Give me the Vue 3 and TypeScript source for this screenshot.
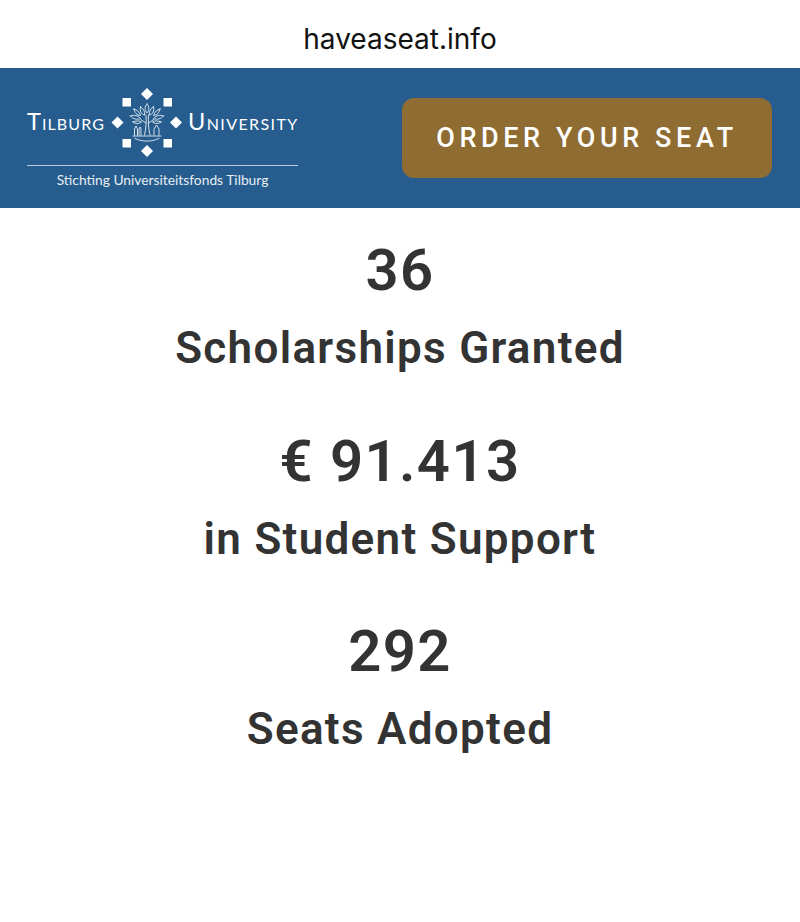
<script setup lang="ts">
interface Stat { value: string; label: string }
const stats: Stat[] = [
  { value: '36', label: 'Scholarships Granted' },
  { value: '€ 91.413', label: 'in Student Support' },
  { value: '292', label: 'Seats Adopted' },
]
</script>

<template>
  <div class="page">
    <div class="address">haveaseat.info</div>
    <header class="header">
      <div class="logo">
        <div class="logo-top">
          <span class="word word-left">Tilburg</span>
          <svg class="emblem" width="90" height="70" viewBox="0 0 90 70" fill="none">
            <g fill="#fff">
              <path d="M45 0l6 6-6 6-6-6z" />
              <path d="M45 57l6 6-6 6-6-6z" />
              <path d="M15.500 28.500l6 6-6 6-6-6z" />
              <path d="M74 28.500l6 6-6 6-6-6z" />
              <rect x="20.500" y="10" width="8.500" height="8.500" />
              <rect x="61.500" y="10" width="8.500" height="8.500" />
              <rect x="20.500" y="51" width="8.500" height="8.500" />
              <rect x="61.500" y="51" width="8.500" height="8.500" />
            </g>
            <g stroke="#fff" stroke-width="0.8" stroke-linecap="round" stroke-linejoin="round">
              <path d="M45 16c2.500 2.500 2.500 6 0 9-2.500-3-2.500-6.500 0-9z" />
              <path d="M38.500 19c3 1.500 4.500 4 4 8-3.500-1-5-4-4-8z" />
              <path d="M51.500 19c-3 1.500-4.500 4-4 8 3.500-1 5-4 4-8z" />
              <path d="M32 21c3 .5 5.500 3 6.500 6.500-3.500 0-6-3-6.500-6.500z" />
              <path d="M58 21c-3 .5-5.500 3-6.500 6.500 3.500 0 6-3 6.500-6.500z" />
              <path d="M28.500 28c3.500-1.500 7.500-.5 10 2.500-3.500 1.500-7.500.5-10-2.500z" />
              <path d="M61.500 28c-3.500-1.500-7.500-.5-10 2.500 3.500 1.500 7.500.5 10-2.500z" />
              <path d="M31 34c3-1.500 6-1.500 8.500 0-2.500 2-6 2-8.500 0z" />
              <path d="M59 34c-3-1.500-6-1.500-8.500 0 2.500 2 6 2 8.500 0z" />
              <path d="M44 27c.3 7 .3 13-1.500 20M46.500 27c-.3 7-.3 13 1.500 20M43.800 35l-5-3.500M46.700 35l5-3.500" />
              <path d="M32.500 47v-6l1.500-3 1.500 3v6M37 47v-6l1-2 1 2v6" />
              <path d="M52 47v-6l2.500-4 2.500 4v6" />
              <path d="M31 48h28" />
              <path d="M33 50.500c7 3.500 17 3.500 24 0" />
            </g>
          </svg>
          <span class="word word-right">University</span>
        </div>
        <div class="logo-sub">Stichting Universiteitsfonds Tilburg</div>
      </div>
      <a class="cta">ORDER YOUR SEAT</a>
    </header>
    <main class="stats">
      <section v-for="s in stats" :key="s.label" class="stat">
        <div class="value">{{ s.value }}</div>
        <div class="label">{{ s.label }}</div>
      </section>
    </main>
  </div>
</template>

<style>
html, body { background: #fff; }
</style>

<style scoped>
.page {
  width: 800px;
  height: 922px;
  background: #fff;
  overflow: hidden;
}
.address {
  height: 68px;
  box-sizing: border-box;
  display: flex;
  align-items: center;
  justify-content: center;
  padding-top: 9px;
  font-family: Inter, sans-serif;
  font-size: 28px;
  color: #111;
}
.header {
  height: 140px;
  background: #265d8e;
  display: flex;
  align-items: flex-start;
  justify-content: space-between;
  padding: 0 28px 0 27px;
}
.logo {
  width: 271px;
  padding-top: 20px;
}
.logo-top {
  display: flex;
  align-items: center;
  height: 70px;
}
.emblem {
  flex: none;
  margin: 0 -3.5px 0 -3.5px;
}
.word {
  font-family: Lato, sans-serif;
  font-variant: small-caps;
  font-size: 23.5px;
  color: #fff;
  line-height: 1;
  white-space: nowrap;
  flex: none;
  margin-bottom: 3px;
}
.word-left {
  width: 78px;
  letter-spacing: 1.1px;
}
.word-right {
  width: 110px;
  text-align: right;
  letter-spacing: 1.4px;
}
.logo-sub {
  margin-top: 7px;
  border-top: 1px solid #b9cbdc;
  padding-top: 5px;
  text-align: center;
  font-family: Lato, sans-serif;
  font-size: 13.8px;
  color: #e6edf3;
}
.cta {
  margin-top: 30px;
  width: 370px;
  height: 80px;
  box-sizing: border-box;
  border-radius: 12px;
  background: #8f6c32;
  color: #fff;
  display: flex;
  align-items: center;
  justify-content: center;
  font-family: Roboto, sans-serif;
  font-weight: 500;
  font-size: 27px;
  letter-spacing: 4.6px;
}
.stats {
  display: flex;
  flex-direction: column;
  align-items: center;
  color: #333;
  font-family: Roboto, sans-serif;
  font-weight: 600;
  padding-top: 27px;
  gap: 47.5px;
}
.stat {
  display: flex;
  flex-direction: column;
  align-items: center;
}
.value {
  font-size: 58px;
  line-height: 70px;
  letter-spacing: 1.4px;
}
.label {
  margin-top: 13px;
  font-size: 44px;
  line-height: 60px;
  letter-spacing: 1.3px;
}
</style>
